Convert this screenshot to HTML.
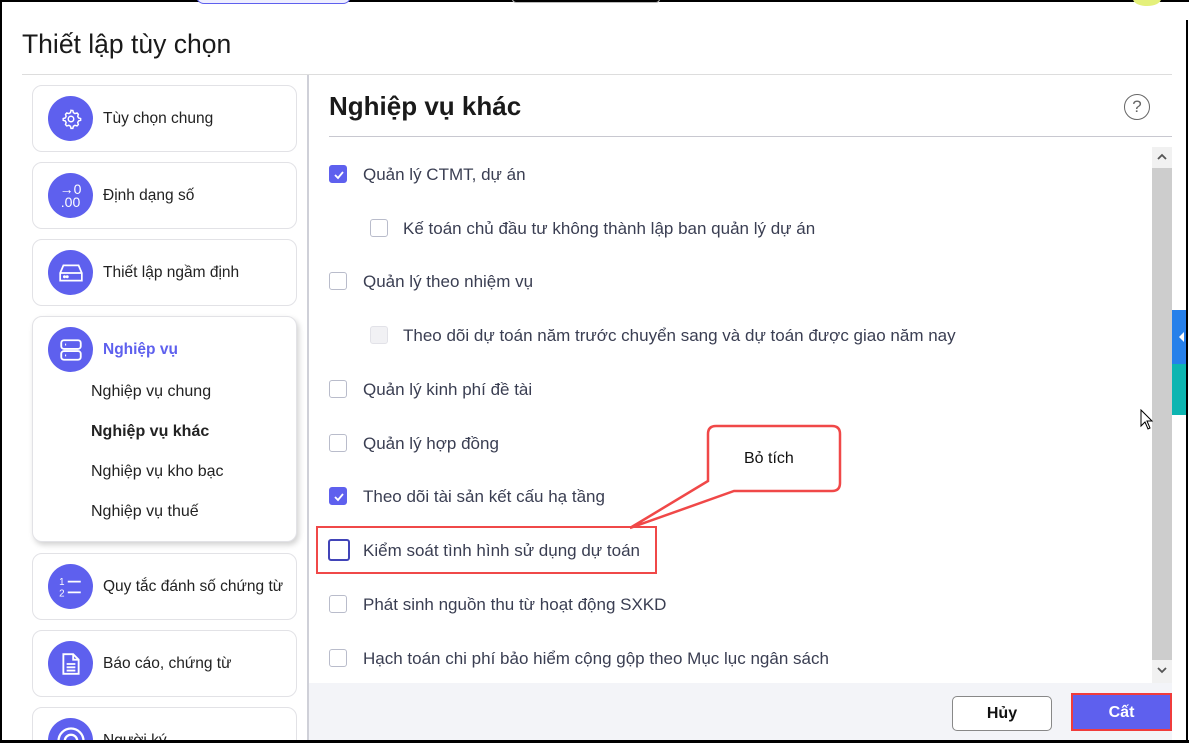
<!DOCTYPE html>
<html style="overflow:hidden"><head><meta charset="utf-8"><style>
*{box-sizing:border-box;margin:0;padding:0}
html,body{width:1189px;height:743px;overflow:hidden}
body{background:#fff;font-family:"Liberation Sans",Arial,sans-serif;position:relative;color:#1f1f1f}
#root{position:absolute;left:0;top:0;width:1189px;height:743px;overflow:hidden}
.abs{position:absolute}
.card{position:absolute;left:32px;width:265px;border:1px solid #e2e2e6;border-radius:10px;background:#fff}
.ic{position:absolute;left:15px;width:45px;height:45px;border-radius:50%;background:#5e60ee;display:flex;align-items:center;justify-content:center;color:#fff}
.lbl{position:absolute;left:70px;font-size:15.5px;color:#222;white-space:nowrap}
.cb{position:absolute;width:18px;height:18px;border:1px solid #b9bccb;border-radius:3px;background:#fff}
.cb.on{background:#5e60ee;border-color:#5e60ee}
.t{position:absolute;font-size:17px;color:#3a3e52;white-space:nowrap}
.sub{position:absolute;left:58px;font-size:16px;color:#222}
</style></head><body><div id="root">
<div class="abs" style="left:0;top:0;width:1189px;height:2px;background:#000"></div>
<div class="abs" style="left:0;top:0;width:2px;height:743px;background:#000"></div>
<div class="abs" style="left:1186px;top:20px;width:2px;height:723px;background:#000"></div>
<div class="abs" style="left:196px;top:-12px;width:155px;height:16px;border:1px solid #5e60ee;border-radius:8px;background:#eef"></div>
<div class="abs" style="left:512px;top:-10px;width:148px;height:13px;border:1px solid #bbb;border-radius:4px"></div>
<div class="abs" style="left:1133px;top:-8px;width:28px;height:14px;border-radius:50%;background:#e4f07a"></div>

<div class="abs" style="left:22px;top:29px;font-size:26.5px;color:#1a1a1a">Thiết lập tùy chọn</div>
<div class="abs" style="left:22px;top:74px;width:1150px;height:1px;background:#ddd"></div>
<div class="abs" style="left:307px;top:75px;width:2px;height:668px;background:#cfd0d8"></div>

<div class="card" style="top:85px;height:67px"><div class="ic" style="top:10px"><svg width="22" height="22" viewBox="0 0 24 24" fill="none" stroke="#fff" stroke-width="1.6"><circle cx="12" cy="12" r="3"/><path d="M12 2.5l2 .3.6 2.3 1.7 1 2.3-.7 1.4 1.5-.7 2.3 1 1.7 2.2.6v2l-2.2.6-1 1.7.7 2.3-1.4 1.5-2.3-.7-1.7 1-.6 2.3h-2l-.6-2.3-1.7-1-2.3.7-1.4-1.5.7-2.3-1-1.7-2.2-.6v-2l2.2-.6 1-1.7-.7-2.3 1.4-1.5 2.3.7 1.7-1 .6-2.3z"/></svg></div><div class="lbl" style="top:24px">Tùy chọn chung</div></div>
<div class="card" style="top:162px;height:67px"><div class="ic" style="top:10px;font-size:14px;line-height:13px;text-align:center;flex-direction:column"><div>→0</div><div>.00</div></div><div class="lbl" style="top:24px">Định dạng số</div></div>
<div class="card" style="top:239px;height:67px"><div class="ic" style="top:10px"><svg width="26" height="22" viewBox="0 0 24 20" fill="none" stroke="#fff" stroke-width="1.6"><path d="M2 10l3-7h14l3 7v7H2z M2 10h20"/><circle cx="6" cy="13.5" r=".6" fill="#fff"/><circle cx="8.5" cy="13.5" r=".6" fill="#fff"/></svg></div><div class="lbl" style="top:24px">Thiết lập ngầm định</div></div>
<div class="card" style="top:316px;height:226px;box-shadow:2px 3px 6px rgba(0,0,0,.18)"><div class="ic" style="top:10px"><svg width="26" height="26" viewBox="0 0 24 24" fill="none" stroke="#fff" stroke-width="1.7"><rect x="3" y="3" width="18" height="8" rx="2.5"/><rect x="3" y="13" width="18" height="8" rx="2.5"/><path d="M6.5 7h1M6.5 17h1"/></svg></div><div class="lbl" style="top:24px;color:#5e60ee;font-weight:bold">Nghiệp vụ</div>
<div class="sub" style="top:66px">Nghiệp vụ chung</div><div class="sub" style="top:106px;font-weight:bold">Nghiệp vụ khác</div><div class="sub" style="top:146px">Nghiệp vụ kho bạc</div><div class="sub" style="top:186px">Nghiệp vụ thuế</div></div>
<div class="card" style="top:553px;height:67px"><div class="ic" style="top:10px"><svg width="26" height="24" viewBox="0 0 24 22" fill="none" stroke="#fff" stroke-width="1.6"><path d="M9 6h12M9 16h12"/><text x="1" y="9" font-size="9" fill="#fff" stroke="none" font-family="Liberation Sans">1</text><text x="1" y="20" font-size="9" fill="#fff" stroke="none" font-family="Liberation Sans">2</text></svg></div><div class="lbl" style="top:24px">Quy tắc đánh số chứng từ</div></div>
<div class="card" style="top:630px;height:67px"><div class="ic" style="top:10px"><svg width="20" height="24" viewBox="0 0 18 22" fill="none" stroke="#fff" stroke-width="1.7"><path d="M2 2h9l5 5v13H2z M11 2v5h5 M5 11h8M5 14h8M5 17h8"/></svg></div><div class="lbl" style="top:24px">Báo cáo, chứng từ</div></div>
<div class="card" style="top:707px;height:67px"><div class="ic" style="top:10px"><svg width="30" height="30" viewBox="0 0 24 24" fill="none" stroke="#fff" stroke-width="1.8"><circle cx="12" cy="12" r="10"/><circle cx="12" cy="12" r="5"/></svg></div><div class="lbl" style="top:24px">Người ký</div></div>

<div class="abs" style="left:329px;top:91px;font-size:26px;font-weight:bold;color:#1a1a1a">Nghiệp vụ khác</div>
<div class="abs" style="left:1124px;top:94px;width:26px;height:26px;border:1.6px solid #666;border-radius:50%;text-align:center;font-size:17px;line-height:23px;color:#666">?</div>
<div class="abs" style="left:329px;top:136px;width:843px;height:1px;background:#c8c8d0"></div>

<div class="cb on" style="left:329px;top:165px"><svg width="18" height="18"><path d="M5 9l3 3 5-6" stroke="#fff" stroke-width="1.8" fill="none"/></svg></div><div class="t" style="left:363px;top:165px">Quản lý CTMT, dự án</div>
<div class="cb" style="left:370px;top:219px"></div><div class="t" style="left:403px;top:219px">Kế toán chủ đầu tư không thành lập ban quản lý dự án</div>
<div class="cb" style="left:329px;top:272px"></div><div class="t" style="left:363px;top:272px">Quản lý theo nhiệm vụ</div>
<div class="cb" style="left:370px;top:326px;background:#f1f1f4;border-color:#e2e2e8"></div><div class="t" style="left:403px;top:326px">Theo dõi dự toán năm trước chuyển sang và dự toán được giao năm nay</div>
<div class="cb" style="left:329px;top:380px"></div><div class="t" style="left:363px;top:380px">Quản lý kinh phí đề tài</div>
<div class="cb" style="left:329px;top:434px"></div><div class="t" style="left:363px;top:434px">Quản lý hợp đồng</div>
<div class="cb on" style="left:329px;top:487px"><svg width="18" height="18"><path d="M5 9l3 3 5-6" stroke="#fff" stroke-width="1.8" fill="none"/></svg></div><div class="t" style="left:363px;top:487px">Theo dõi tài sản kết cấu hạ tầng</div>
<div class="cb" style="left:328px;top:539px;width:22px;height:22px;border:2px solid #4144b8"></div><div class="t" style="left:363px;top:541px">Kiểm soát tình hình sử dụng dự toán</div>
<div class="cb" style="left:329px;top:595px"></div><div class="t" style="left:363px;top:595px">Phát sinh nguồn thu từ hoạt động SXKD</div>
<div class="cb" style="left:329px;top:649px"></div><div class="t" style="left:363px;top:649px">Hạch toán chi phí bảo hiểm cộng gộp theo Mục lục ngân sách</div>

<div class="abs" style="left:316px;top:526px;width:341px;height:48px;border:2px solid #f04848"></div>
<svg class="abs" style="left:620px;top:420px" width="230" height="115"><path d="M96 6 Q88 6 88 14 V61 L10 108 L114 71 H212 Q220 71 220 63 V14 Q220 6 212 6 Z" fill="#fff" stroke="#f04848" stroke-width="2.5"/></svg>
<div class="abs" style="left:744px;top:450px;font-size:16px;color:#111">Bỏ tích</div>

<div class="abs" style="left:1152px;top:147px;width:20px;height:536px;background:#f1f1f1"></div>
<div class="abs" style="left:1152px;top:168px;width:20px;height:492px;background:#cdcdcd"></div>
<svg class="abs" style="left:1156px;top:151px" width="12" height="12"><path d="M2 8l4-4 4 4" stroke="#555" stroke-width="1.8" fill="none"/></svg>
<svg class="abs" style="left:1156px;top:664px" width="12" height="12"><path d="M2 4l4 4 4-4" stroke="#555" stroke-width="1.8" fill="none"/></svg>
<svg class="abs" style="left:1140px;top:409px" width="14" height="22"><path d="M1 1v16l4-4 3 7 2-1-3-7h5z" fill="#fff" stroke="#000" stroke-width="1"/></svg>

<div class="abs" style="left:1172px;top:310px;width:14px;height:54px;background:#2680ea"></div>
<svg class="abs" style="left:1178px;top:331px" width="8" height="12"><path d="M6 1L1 6l5 5z" fill="#fff"/></svg>
<div class="abs" style="left:1172px;top:364px;width:14px;height:51px;background:#0db5b1"></div>

<div class="abs" style="left:309px;top:683px;width:863px;height:57px;background:#f3f4f8"></div>
<div class="abs" style="left:952px;top:696px;width:100px;height:35px;border:1px solid #888;border-radius:5px;background:#fff;text-align:center;line-height:33px;font-size:16px;font-weight:bold;color:#111">Hủy</div>
<div class="abs" style="left:1071px;top:693px;width:101px;height:38px;border:2px solid #f03c3c;background:#5e60ee;text-align:center;line-height:36px;font-size:16px;font-weight:bold;color:#fff">Cất</div>
<div class="abs" style="left:0;top:740px;width:1189px;height:3px;background:#000"></div>
</div></body></html>
